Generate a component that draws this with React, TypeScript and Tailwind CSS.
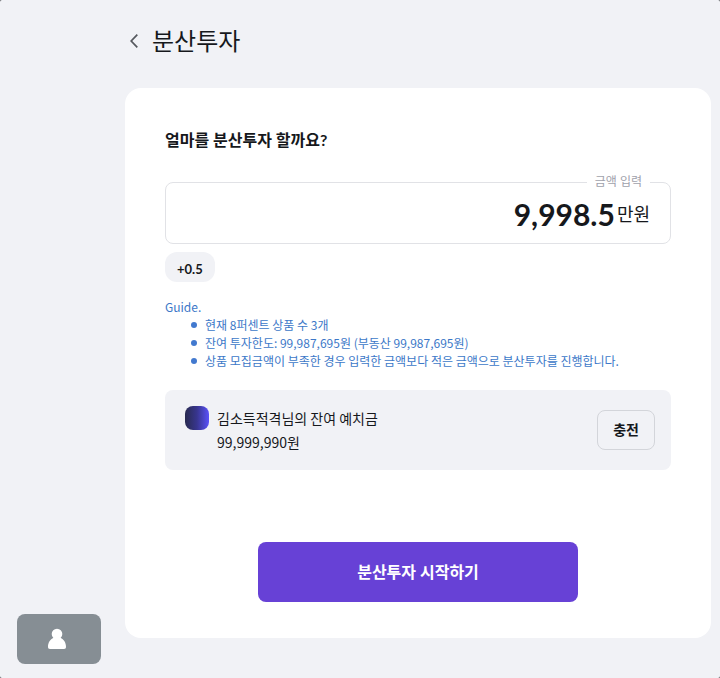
import React, { useState } from 'react';

const GUIDES = [
   '현재 8퍼센트 상품 수 3개',
   '잔여 투자한도: 99,987,695원 (부동산 99,987,695원)',
   '상품 모집금액이 부족한 경우 입력한 금액보다 적은 금액으로 분산투자를 진행합니다.'
];

function BackIcon() {
   return (
      <svg className="w-2 h-4" viewBox="0 0 8 16" fill="none" stroke="#55585e" strokeWidth="1.7" aria-hidden="true">
         <path d="M7.3 1.6 L1.2 8 L7.3 14.4" />
      </svg>
   );
}

function PersonIcon() {
   return (
      <svg className="w-5 h-6" viewBox="0 0 20 24" fill="#fff" aria-hidden="true">
         <circle cx="10" cy="7.1" r="5.3" />
         <path d="M6.500 10.800h7c3.300 1.600 5.500 5 5.500 9 0 1.400-.6 2.200-2 2.200H3c-1.400 0-2-.8-2-2.200 0-4 2.200-7.400 5.500-9z" />
      </svg>
   );
}

export default function App() {
   const [amount, setAmount] = useState(9998.5);

   return (
      <div className="bg-[#55575a]">
         <div className="min-h-screen flex rounded-[2px] bg-[#f1f2f6] text-[#16181c] font-['Lato','Noto_Sans_CJK_KR',sans-serif]">
            <aside className="w-[125px] shrink-0 flex items-end pl-[17px] pb-[14px]">
               <button aria-label="내 정보" className="w-[84px] h-[50px] flex items-center justify-center rounded-lg bg-[#868e94] pr-1">
                  <PersonIcon />
               </button>
            </aside>

            <main className="flex-1 min-w-0 pr-[9px] pb-10">
               <header className="flex items-center gap-[14px] pl-[5px] pt-[25px] pb-[31px]">
                  <a href="#" aria-label="뒤로"><BackIcon /></a>
                  <h1 className="text-2xl leading-8">분산투자</h1>
               </header>

               <section className="bg-white rounded-2xl px-10 pt-10 pb-9">
                  <h2 className="text-base leading-6 font-bold">얼마를 분산투자 할까요?</h2>

                  <fieldset className="mt-5 border border-[#e1e2e6] rounded-lg pl-4 pr-5">
                     <legend className="ml-auto px-2 text-xs leading-5 text-[#9fa2ac]">
                        <label htmlFor="amount">금액 입력</label>
                     </legend>
                     <div className="h-[51px] flex items-center gap-[2px] pb-2">
                        <input
                           id="amount"
                           inputMode="decimal"
                           className="flex-1 min-w-0 text-right text-3xl font-bold outline-none"
                           value={amount.toLocaleString('en-US')}
                           onChange={(e) => setAmount(Number(e.target.value.replace(/[^0-9.]/g, '')))}
                        />
                        <span className="text-lg">만원</span>
                     </div>
                  </fieldset>
                  <button
                     className="mt-2 h-[30px] px-3 pt-1 rounded-xl bg-[#f1f2f6] text-[13px] leading-5 font-bold block"
                     onClick={() => setAmount(amount + 0.5)}
                  >
                     +0.5
                  </button>

                  <div className="mt-4 text-xs leading-[18px] text-[#3c78c8] font-['Noto_Sans_CJK_KR',sans-serif]">
                     <p>Guide.</p>
                     <ul>
                        {GUIDES.map((guide) => (
                           <li key={guide} className="flex items-center gap-2 pl-[26px]">
                              <span className="w-[6px] h-[6px] shrink-0 rounded-full bg-[#4279cf]" />
                              {guide}
                           </li>
                        ))}
                     </ul>
                  </div>

                  <div className="mt-5 flex items-center justify-between rounded-lg bg-[#f1f2f6] pl-5 pr-4 py-4">
                     <div className="flex gap-2">
                        <span className="w-6 h-6 rounded-lg bg-linear-to-r from-[#292a50] via-[#38358f] to-[#5a52fa]" />
                        <p className="text-sm leading-6 font-['Noto_Sans_CJK_KR',sans-serif]">
                           김소득적격님의 잔여 예치금<br />
                           99,999,990원
                        </p>
                     </div>
                     <button className="h-10 px-[15px] rounded-lg border border-[#d3d5da] text-sm font-bold">충전</button>
                  </div>

                  <button className="mt-[72px] mx-auto block w-80 max-w-full h-[60px] rounded-lg bg-[#6741d6] text-white text-base font-bold">
                     분산투자 시작하기
                  </button>
               </section>
            </main>
         </div>
      </div>
   );
}
